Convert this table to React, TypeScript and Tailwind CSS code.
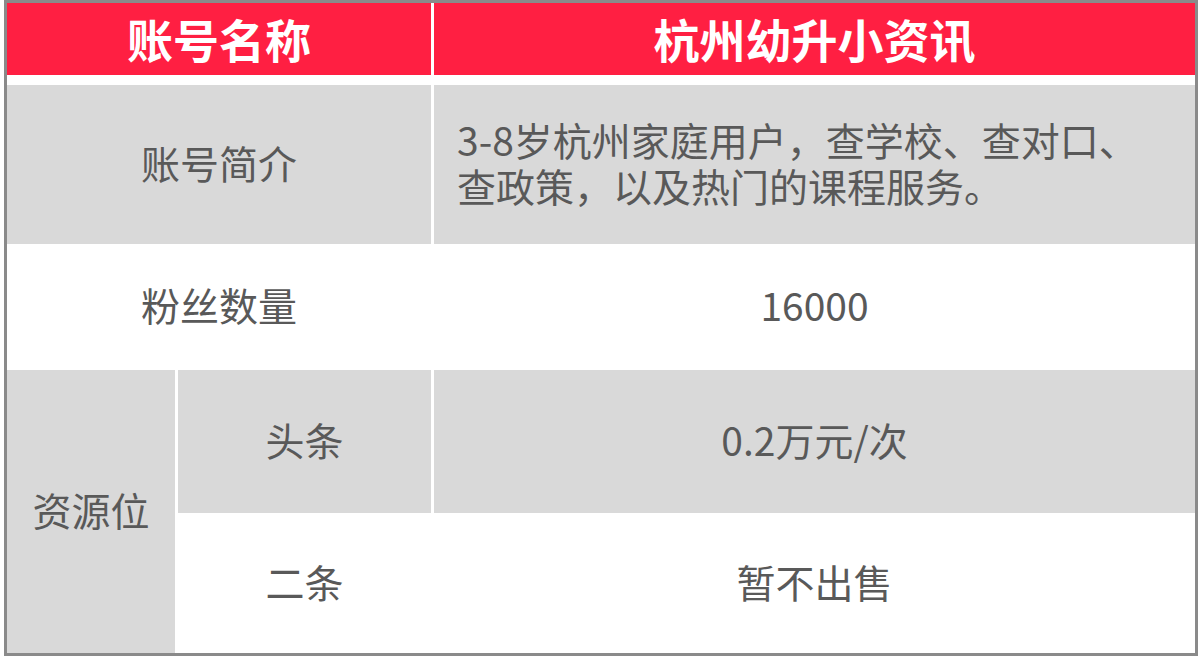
import React from 'react';

const font = { fontFamily: '"Noto Sans CJK SC", "Noto Sans", sans-serif' };

const App: React.FC = () => {
  return (
    <div className="w-[1204px] h-[664px] bg-white" style={font}>
      <div className="ml-[4px] w-[1194px] border-[3px] border-[#8a8a8a] bg-white">
        <div className="grid grid-cols-[168px_253px_761px] gap-x-[3px] gap-y-[2px] text-[#595959] text-[39px] leading-none">
          {/* header */}
          <div className="col-span-2 h-[72px] mb-[8px] pb-[3px] bg-[#ff1f42] flex items-center justify-center text-white text-[46px] font-bold">
            账号名称
          </div>
          <div className="h-[72px] mb-[8px] pb-[3px] bg-[#ff1f42] flex items-center justify-center text-white text-[46px] font-bold">
            杭州幼升小资讯
          </div>

          {/* intro */}
          <div className="col-span-2 h-[159px] pb-[5px] bg-[#d9d9d9] flex items-center justify-center">账号简介</div>
          <div className="h-[159px] pb-[5px] bg-[#d9d9d9] flex items-center pl-[23px]">
            <div className="flex flex-col leading-[46px]">
              <span>3-8岁杭州家庭用户，查学校、查对口、</span>
              <span>查政策，以及热门的课程服务。</span>
            </div>
          </div>

          {/* fans */}
          <div className="col-span-2 h-[122px] pb-[5px] bg-white flex items-center justify-center">粉丝数量</div>
          <div className="h-[122px] pb-[5px] bg-white flex items-center justify-center">16000</div>

          {/* resources */}
          <div className="row-span-2 pb-[5px] bg-[#d9d9d9] flex items-center justify-center">资源位</div>
          <div className="h-[143px] pb-[5px] bg-[#d9d9d9] flex items-center justify-center">头条</div>
          <div className="h-[143px] pb-[5px] bg-[#d9d9d9] flex items-center justify-center">0.2万元/次</div>
          <div className="h-[138px] pb-[5px] bg-white flex items-center justify-center">二条</div>
          <div className="h-[138px] pb-[5px] bg-white flex items-center justify-center">暂不出售</div>
        </div>
      </div>
    </div>
  );
};

export default App;
